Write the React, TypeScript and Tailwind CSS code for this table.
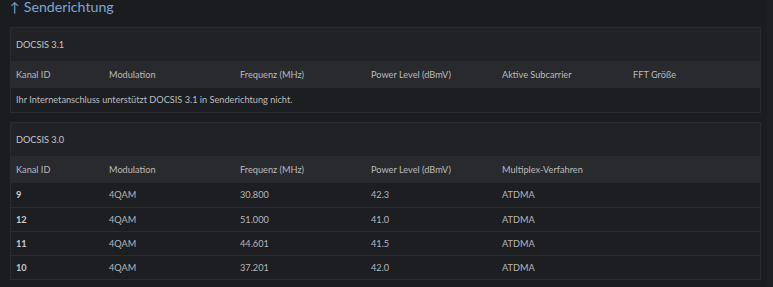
import React from 'react';

type Row = { kanal: string; modulation: string; frequenz: string; power: string; multiplex: string };

const upstream30: Row[] = [
  { kanal: '9', modulation: '4QAM', frequenz: '30.800', power: '42.3', multiplex: 'ATDMA' },
  { kanal: '12', modulation: '4QAM', frequenz: '51.000', power: '41.0', multiplex: 'ATDMA' },
  { kanal: '11', modulation: '4QAM', frequenz: '44.601', power: '41.5', multiplex: 'ATDMA' },
  { kanal: '10', modulation: '4QAM', frequenz: '37.201', power: '42.0', multiplex: 'ATDMA' },
];

const colWidths = ['w-[93px]', 'w-[131px]', 'w-[131px]', 'w-[131px]', 'w-[131px]', 'flex-1'];

function HeaderRow({ labels }: { labels: string[] }) {
  return (
    <div className="flex h-[27px] items-center bg-[#292a2d] text-[#b9babc]">
      {colWidths.map((w, i) => (
        <div key={i} className={`${w} pl-[5px]`}>{labels[i] ?? ''}</div>
      ))}
    </div>
  );
}

function Card({ title, children }: { title: string; children: React.ReactNode }) {
  return (
    <section className="border border-[#2a2b2e] bg-[#212225]">
      <div className="flex h-[33px] items-center pl-[5px] text-[#c4c5c7]">{title}</div>
      {children}
    </section>
  );
}

export default function App() {
  return (
    <div
      className="flex h-[287px] w-[773px] overflow-hidden bg-[#1b1c1f] text-[9.2px]"
      style={{ fontFamily: '"Source Sans Pro", Lato, "Noto Sans", sans-serif' }}
    >
      <main className="flex w-[767px] flex-col pl-[10px] pr-[6px]">
        <h2 className="flex h-[14px] items-center gap-[4px] text-[14.2px] leading-none text-[#7ea6d3]">
          <span className="text-[13px]">↑</span>
          <span>Senderichtung</span>
        </h2>

        <div className="mt-[13px]">
          <Card title="DOCSIS 3.1">
            <HeaderRow labels={['Kanal ID', 'Modulation', 'Frequenz (MHz)', 'Power Level (dBmV)', 'Aktive Subcarrier', 'FFT Größe']} />
            <div className="flex h-[24px] items-center bg-[#1d1e21] pl-[5px] text-[#bcbdbf]">
              Ihr Internetanschluss unterstützt DOCSIS 3.1 in Senderichtung nicht.
            </div>
          </Card>
        </div>

        <div className="mt-[9px]">
          <Card title="DOCSIS 3.0">
            <HeaderRow labels={['Kanal ID', 'Modulation', 'Frequenz (MHz)', 'Power Level (dBmV)', 'Multiplex-Verfahren']} />
            {upstream30.map((r, idx) => (
              <div
                key={r.kanal}
                className={`flex h-[24px] items-center bg-[#1d1e21] text-[#b6b7b9] ${idx > 0 ? 'border-t border-[#2a2b2e]' : ''}`}
              >
                <div className="w-[93px] pl-[5px] font-bold text-[#c9cacc]">{r.kanal}</div>
                <div className="w-[131px] pl-[5px]">{r.modulation}</div>
                <div className="w-[131px] pl-[5px]">{r.frequenz}</div>
                <div className="w-[131px] pl-[5px]">{r.power}</div>
                <div className="w-[131px] pl-[5px]">{r.multiplex}</div>
                <div className="flex-1" />
              </div>
            ))}
          </Card>
        </div>
      </main>
      <div className="w-[6px] bg-[#1e1f22]" />
    </div>
  );
}
